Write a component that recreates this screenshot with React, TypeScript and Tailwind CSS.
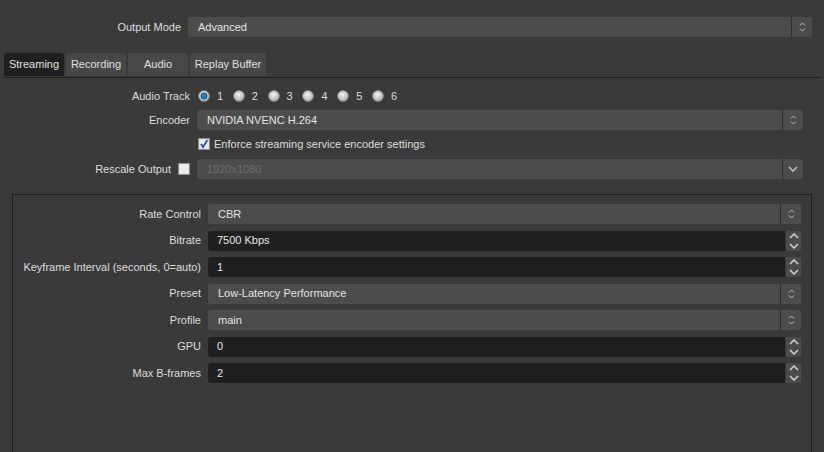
import clsx from 'clsx'

const UpDownSmall = () => (
  <svg width="7" height="12" viewBox="0 0 7 12" fill="none" stroke="#bdbdbd" strokeWidth="1">
    <polyline points="1,4.5 3.5,2 6,4.5" />
    <polyline points="1,7.5 3.5,10 6,7.5" />
  </svg>
)

const ChevronDown = () => (
  <svg width="10" height="6" viewBox="0 0 10 6" fill="none" stroke="#c8c8c8" strokeWidth="1.4">
    <polyline points="1,1 5,5 9,1" />
  </svg>
)

const Combo = ({
  value,
  className,
  disabled,
  single,
}: {
  value: string
  className?: string
  disabled?: boolean
  single?: boolean
}) => (
  <div className={clsx(className, 'flex h-5 shrink-0 rounded-[3px] bg-[#4c4c4c]')}>
    <div className={clsx(disabled ? 'text-[#6e6e6e]' : 'text-[#e4e4e4]', 'flex flex-1 items-center pl-[10px]')}>
      {value}
    </div>
    <div className="flex w-[21px] items-center justify-center border-l border-[#2e2e2e]">
      {single ? <ChevronDown /> : <UpDownSmall />}
    </div>
  </div>
)

const SpinArrow = ({ up }: { up?: boolean }) => (
  <div className="flex h-[10px] w-[15px] items-center justify-center rounded-[2px] bg-[#4c4c4c]">
    <svg width="10" height="6" viewBox="0 0 10 6" fill="none" stroke="#d4d4d4" strokeWidth="1.5">
      <polyline points={up ? '1,5 5,1 9,5' : '1,1 5,5 9,1'} />
    </svg>
  </div>
)

const Spin = ({ value }: { value: string }) => (
  <div className="flex h-5 w-[593px] shrink-0">
    <div className="flex flex-1 items-center rounded-l-[3px] bg-[#1f1f1f] pl-[9px] text-[#e8e8e8]">{value}</div>
    <div className="ml-px flex flex-col justify-between">
      <SpinArrow up />
      <SpinArrow />
    </div>
  </div>
)

const Radio = ({ checked }: { checked?: boolean }) => (
  <svg width="12" height="12" viewBox="0 0 12 12">
    <defs>
      <radialGradient id={checked ? 'rg-on' : 'rg-off'} cx="0.45" cy="0.4" r="0.6">
        <stop offset="0" stopColor="#f4f4f4" />
        <stop offset="1" stopColor="#a9a9a9" />
      </radialGradient>
    </defs>
    <circle cx="6" cy="6" r="5.5" fill={`url(#${checked ? 'rg-on' : 'rg-off'})`} stroke="#7c7c7c" strokeWidth="0.8" />
    {checked && <circle cx="6" cy="6" r="3" fill="#1b84cf" stroke="#123b5c" strokeWidth="0.8" />}
  </svg>
)

const Checkbox = ({ checked }: { checked?: boolean }) => (
  <svg width="12" height="12" viewBox="0 0 12 12">
    <rect x="0.5" y="0.5" width="11" height="11" fill="#dedede" stroke="#8c8c8c" />
    <rect x="1.5" y="1.5" width="9" height="9" fill="#ececec" />
    {checked && <polyline points="3,6 5,9 9.5,2" fill="none" stroke="#2f4da8" strokeWidth="1.8" />}
  </svg>
)

const GroupRow = ({ label, children }: { label: string; children: React.ReactNode }) => (
  <div className="flex h-5 items-center">
    <div className="w-[188px] shrink-0 text-right">{label}</div>
    <div className="ml-[7px]">{children}</div>
  </div>
)

const tabs = [
  { name: 'Streaming', w: 'w-[60px]', active: true },
  { name: 'Recording', w: 'w-[60px]' },
  { name: 'Audio', w: 'w-[60px]' },
  { name: 'Replay Buffer', w: 'w-[76px]' },
]

export default function App() {
  return (
    <div className="h-[452px] w-[824px] overflow-hidden bg-[#3a3a3a] font-[family-name:'Liberation_Sans',Arial,sans-serif] text-[11px] text-[#dedede]">
      <div className="flex h-5 items-center pt-0 mt-[17px]">
        <div className="w-[181px] shrink-0 text-right">Output Mode</div>
        <Combo value="Advanced" className="ml-[7px] w-[624px]" />
      </div>

      <div className="mt-[16px] flex gap-[2px] pl-[4px]">
        {tabs.map((t) => (
          <div
            key={t.name}
            className={clsx(
              t.w,
              t.active ? 'bg-[#1f1f1f]' : 'bg-[#474747]',
              'flex h-[23px] items-center justify-center rounded-t-[3px] text-[#e0e0e0]'
            )}
          >
            {t.name}
          </div>
        ))}
      </div>
      <div className="ml-[3px] mt-px h-px w-[818px] bg-[#1e1e1e]" />

      <div className="mt-[8px] flex h-5 items-center">
        <div className="w-[190px] shrink-0 text-right">Audio Track</div>
        <div className="ml-[8px] flex">
          {[1, 2, 3, 4, 5, 6].map((n) => (
            <div key={n} className="flex w-[34.8px] items-center gap-[7px]">
              <Radio checked={n === 1} />
              <span>{n}</span>
            </div>
          ))}
        </div>
      </div>

      <div className="mt-[4px] flex h-5 items-center">
        <div className="w-[190px] shrink-0 text-right">Encoder</div>
        <Combo value="NVIDIA NVENC H.264" className="ml-[7px] w-[606px]" />
      </div>

      <div className="mt-[4px] flex h-5 items-center gap-[4px] pl-[198px]">
        <Checkbox checked />
        <span>Enforce streaming service encoder settings</span>
      </div>

      <div className="mt-[5px] flex h-5 items-center">
        <div className="flex w-[190px] shrink-0 items-center justify-end gap-[7px]">
          <span>Rescale Output</span>
          <Checkbox />
        </div>
        <Combo value="1920x1080" className="ml-[7px] w-[606px]" disabled single />
      </div>

      <div className="ml-[12px] mt-[15px] h-[270px] w-[800px] border border-[#1f1f1f] pt-[9px]">
        <div className="flex flex-col gap-[6.5px]">
          <GroupRow label="Rate Control">
            <Combo value="CBR" className="w-[593px]" />
          </GroupRow>
          <GroupRow label="Bitrate">
            <Spin value="7500 Kbps" />
          </GroupRow>
          <GroupRow label="Keyframe Interval (seconds, 0=auto)">
            <Spin value="1" />
          </GroupRow>
          <GroupRow label="Preset">
            <Combo value="Low-Latency Performance" className="w-[593px]" />
          </GroupRow>
          <GroupRow label="Profile">
            <Combo value="main" className="w-[593px]" />
          </GroupRow>
          <GroupRow label="GPU">
            <Spin value="0" />
          </GroupRow>
          <GroupRow label="Max B-frames">
            <Spin value="2" />
          </GroupRow>
        </div>
      </div>
    </div>
  )
}
